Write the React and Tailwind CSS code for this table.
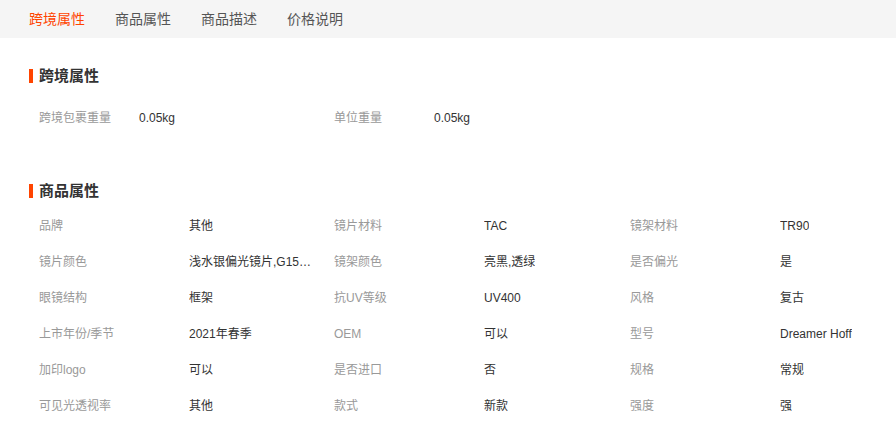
const tabs = ['跨境属性', '商品属性', '商品描述', '价格说明'];

const crossBorder = [
  ['跨境包裹重量', '0.05kg'],
  ['单位重量', '0.05kg'],
];

const goods = [
  [['品牌', '其他'], ['镜片材料', 'TAC'], ['镜架材料', 'TR90']],
  [['镜片颜色', '浅水银偏光镜片,G15灰色偏光镜片'], ['镜架颜色', '亮黑,透绿'], ['是否偏光', '是']],
  [['眼镜结构', '框架'], ['抗UV等级', 'UV400'], ['风格', '复古']],
  [['上市年份/季节', '2021年春季'], ['OEM', '可以'], ['型号', 'Dreamer Hoff']],
  [['加印logo', '可以'], ['是否进口', '否'], ['规格', '常规']],
  [['可见光透视率', '其他'], ['款式', '新款'], ['强度', '强']],
];

const colWidths = ['w-[295px]', 'w-[296px]', 'w-[266px]'];

function Heading({ children }) {
  return (
    <div className="flex items-center h-[22px]">
      <span className="w-[4px] h-[14px] bg-[#ff4400] mr-[6px]"></span>
      <span className="text-[15px] font-bold text-[#333]">{children}</span>
    </div>
  );
}

export default function App() {
  return (
    <div
      className="w-[896px] h-[441px] bg-white overflow-hidden"
      style={{ fontFamily: '"Liberation Sans", "Noto Sans CJK SC", sans-serif' }}
    >
      {/* Tabs */}
      <div className="h-[38px] bg-[#f5f5f5] flex items-center pl-[29px] gap-[30px]">
        {tabs.map((t, i) => (
          <span
            key={t}
            className={`text-[14px] ${i === 0 ? 'text-[#ff4400]' : 'text-[#555]'}`}
          >
            {t}
          </span>
        ))}
      </div>

      {/* 跨境属性 */}
      <div className="pl-[29px] mt-[27px]">
        <Heading>跨境属性</Heading>
      </div>
      <div className="pl-[39px] mt-[21px] flex text-[12px]">
        {crossBorder.map(([k, v]) => (
          <div key={k} className="flex w-[295px] h-[20px] items-center">
            <span className="w-[100px] text-[#999]">{k}</span>
            <span className="text-[#333]">{v}</span>
          </div>
        ))}
      </div>

      {/* 商品属性 */}
      <div className="pl-[29px] mt-[52px]">
        <Heading>商品属性</Heading>
      </div>
      <div className="pl-[39px] mt-[6px] flex flex-col text-[12px]">
        {goods.map((row, r) => (
          <div key={r} className="flex h-[36px] items-center">
            {row.map(([k, v], c) => (
              <div key={k} className={`flex items-center shrink-0 ${colWidths[c]}`}>
                <span className="w-[150px] shrink-0 text-[#999]">{k}</span>
                <span className="text-[#333] max-w-[126px] truncate">{v}</span>
              </div>
            ))}
          </div>
        ))}
      </div>
    </div>
  );
}
